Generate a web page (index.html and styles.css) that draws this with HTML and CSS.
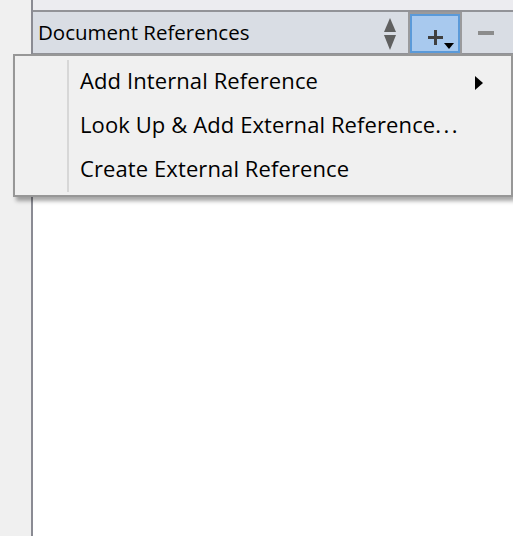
FILE: index.html
```html
<!DOCTYPE html>
<html>
<head>
<meta charset="utf-8">
<link rel="stylesheet" href="styles.css">
</head>
<body>
<div class="app">
  <div class="sidebar"></div>
  <div class="divider"></div>
  <div class="main">
    <div class="topband"></div>
    <div class="header">
      <span class="title">Document References</span>
      <div class="tools">
        <svg class="sort" width="14" height="34" viewBox="0 0 14 34">
          <polygon points="7,1 13,15 1,15" fill="#606060"/>
          <polygon points="1,18 13,18 7,33" fill="#606060"/>
        </svg>
        <div class="btn add">
          <svg width="50" height="38" viewBox="0 0 50 38">
            <rect x="18" y="21" width="15" height="3" fill="#3f3f3f"/>
            <rect x="24" y="15" width="3" height="15" fill="#3f3f3f"/>
            <polygon points="34,28 44,28 39,34" fill="#000"/>
          </svg>
        </div>
        <div class="btn remove">
          <span class="minus"></span>
        </div>
      </div>
    </div>
    <div class="content"></div>
  </div>
  <div class="menu">
    <div class="menu-sep"></div>
    <ul class="items">
      <li class="item">Add Internal Reference<span class="sub"></span></li>
      <li class="item">Look Up &amp; Add External Reference<span class="dots">...</span></li>
      <li class="item">Create External Reference</li>
    </ul>
  </div>
</div>
</body>
</html>
```

FILE: styles.css
```css
* { box-sizing: border-box; }
html, body { margin: 0; padding: 0; }
body {
  width: 513px;
  height: 536px;
  overflow: hidden;
  font-family: "Open Sans", "Noto Sans", sans-serif;
  color: #000;
}
.app {
  position: relative;
  display: grid;
  grid-template-columns: 31px 2px 1fr;
  height: 536px;
}
.sidebar { background: #f0f0f0; }
.divider { background: #8a8b93; }
.main {
  display: flex;
  flex-direction: column;
  background: #fff;
}
.topband { height: 10px; background: #ececf0; }
.header {
  height: 45px;
  border-top: 2px solid #929398;
  border-bottom: 2px solid #929398;
  background: #d9dde4;
  display: flex;
  align-items: center;
  padding-left: 5px;
}
.title {
  font-size: 20.5px;
  line-height: 41px;
  flex: 1;
}
.tools {
  display: flex;
  align-items: center;
  height: 41px;
}
.sort {
  align-self: flex-start;
  margin-top: 5px;
  margin-right: 11px;
}
.btn {
  display: flex;
  align-items: center;
  justify-content: center;
}
.add {
  width: 54px;
  height: 43px;
  margin-top: 2px;
  border: 2px solid #9a9a9c;
  background: #a8c9ee;
  box-shadow: inset 0 0 0 2px #5a9ad9;
}
.remove {
  width: 51px;
  height: 41px;
  padding-left: 16px;
  justify-content: flex-start;
}
.minus {
  display: block;
  width: 16px;
  height: 4px;
  background: #8c8c8c;
}
.content { flex: 1; background: #fff; }

.menu {
  position: absolute;
  left: 13px;
  top: 54px;
  width: 500px;
  height: 143px;
  background: #f0f0f0;
  border: 2px solid #979797;
  box-shadow: 3px 4px 4px rgba(0,0,0,0.35);
}
.menu-sep {
  position: absolute;
  left: 52px;
  top: 4px;
  bottom: 3px;
  width: 2px;
  background: #d7d7d7;
}
.items {
  list-style: none;
  margin: 0;
  padding: 2px 0 0 65px;
}
.item {
  position: relative;
  font-size: 22px;
  line-height: 44px;
  height: 44px;
  white-space: nowrap;
  letter-spacing: 0.1px;
}
.dots { letter-spacing: 2.5px; }
.sub {
  position: absolute;
  left: 395px;
  top: 18px;
  width: 0;
  height: 0;
  border-top: 7px solid transparent;
  border-bottom: 7px solid transparent;
  border-left: 8px solid #000;
}
```
